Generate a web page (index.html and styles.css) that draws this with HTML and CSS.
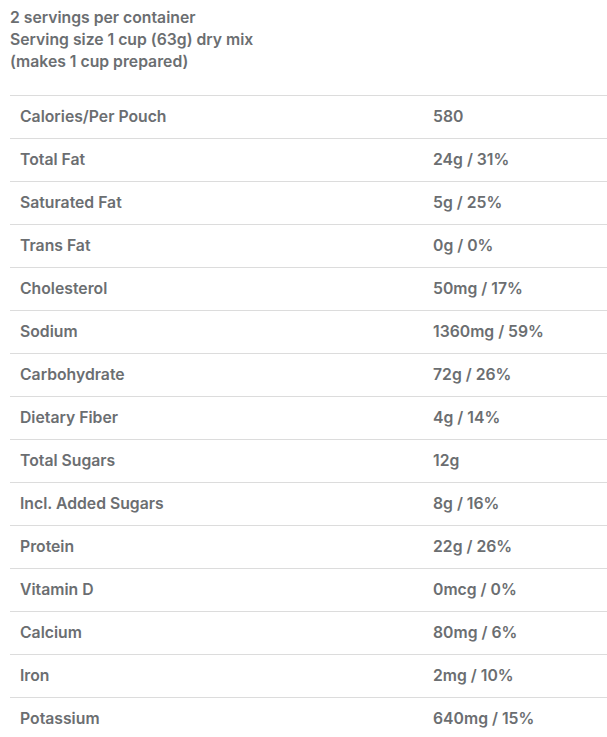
FILE: index.html
```html
<!DOCTYPE html>
<html>
<head>
<meta charset="utf-8">
<link rel="stylesheet" href="styles.css">
</head>
<body>
<div class="panel">
  <div class="serving">
    <div>2 servings per container</div>
    <div>Serving size 1 cup (63g) dry mix</div>
    <div>(makes 1 cup prepared)</div>
  </div>
  <div class="facts">
    <div class="row"><span class="name">Calories/Per Pouch</span><span class="val">580</span></div>
    <div class="row"><span class="name">Total Fat</span><span class="val">24g / 31%</span></div>
    <div class="row"><span class="name">Saturated Fat</span><span class="val">5g / 25%</span></div>
    <div class="row"><span class="name">Trans Fat</span><span class="val">0g / 0%</span></div>
    <div class="row"><span class="name">Cholesterol</span><span class="val">50mg / 17%</span></div>
    <div class="row"><span class="name">Sodium</span><span class="val">1360mg / 59%</span></div>
    <div class="row"><span class="name">Carbohydrate</span><span class="val">72g / 26%</span></div>
    <div class="row"><span class="name">Dietary Fiber</span><span class="val">4g / 14%</span></div>
    <div class="row"><span class="name">Total Sugars</span><span class="val">12g</span></div>
    <div class="row"><span class="name">Incl. Added Sugars</span><span class="val">8g / 16%</span></div>
    <div class="row"><span class="name">Protein</span><span class="val">22g / 26%</span></div>
    <div class="row"><span class="name">Vitamin D</span><span class="val">0mcg / 0%</span></div>
    <div class="row"><span class="name">Calcium</span><span class="val">80mg / 6%</span></div>
    <div class="row"><span class="name">Iron</span><span class="val">2mg / 10%</span></div>
    <div class="row"><span class="name">Potassium</span><span class="val">640mg / 15%</span></div>
  </div>
</div>
</body>
</html>
```
FILE: styles.css
```css
html, body {
  margin: 0;
  padding: 0;
  background: #fff;
}
body {
  font-family: Inter, "Liberation Sans", sans-serif;
  font-size: 15.75px;
  font-weight: 600;
  color: #6b6e71;
}
.panel {
  padding: 7px 0 0 10px;
}
.serving {
  line-height: 22px;
  margin-bottom: 22px;
}
.facts {
  border-top: 1px solid #dcdcdc;
}
.row {
  display: grid;
  grid-template-columns: 423px 1fr;
  height: 42px;
  padding-bottom: 1px;
  box-sizing: border-box;
  align-items: center;
  border-bottom: 1px solid #dcdcdc;
}
.row {
  height: 43px;
}
.name {
  padding-left: 10px;
}
```
